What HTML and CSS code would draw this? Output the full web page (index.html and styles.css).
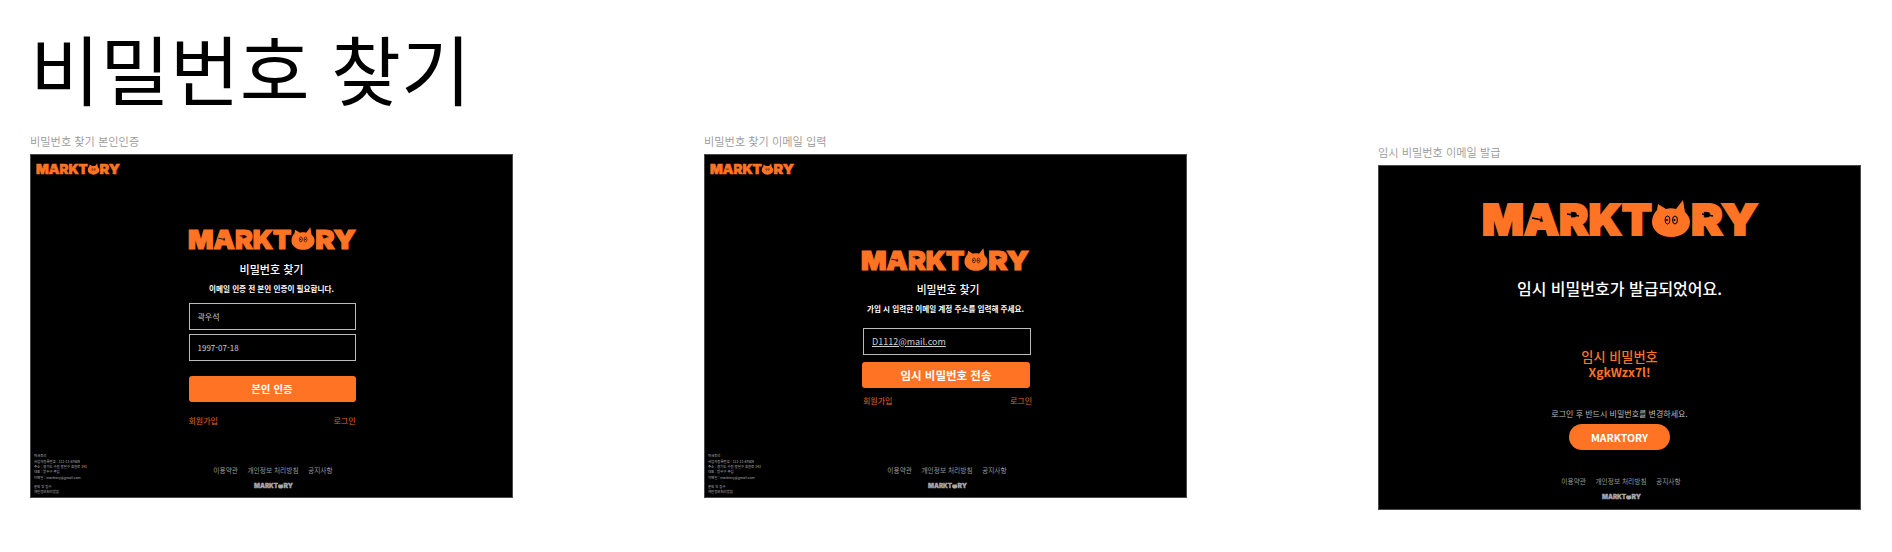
FILE: index.html
```html
<!DOCTYPE html>
<html lang="ko">
<head>
<meta charset="utf-8">
<title>비밀번호 찾기</title>
<link rel="stylesheet" href="styles.css">
</head>
<body>
<h1 class="page-title">비밀번호 찾기</h1>
<div class="boards">

  <section class="board">
    <p class="board-label">비밀번호 찾기 본인인증</p>
    <div class="screen">
      <div class="screen-head">
        <svg class="logo logo-sm" viewBox="0 0 276 37"><text class="logo-text" x="0" y="35" textLength="170" lengthAdjust="spacingAndGlyphs">MARKT</text><text class="logo-text" x="209" y="35" textLength="67" lengthAdjust="spacingAndGlyphs">RY</text><path class="logo-fill" d="M170 22C170 17 172 13 175 10L176 4L184 9C187 8 191 8 194 9L201 0L203 12C206 15 208 18 208 22C208 31 199 37 189 37C179 37 170 31 170 22Z"/><ellipse class="logo-eye" cx="185.5" cy="20" rx="2.4" ry="4"/><ellipse class="logo-eye" cx="193" cy="20" rx="2.4" ry="4"/><circle class="logo-pupil" cx="185" cy="20" r="1"/><circle class="logo-pupil" cx="192.5" cy="20" r="1"/><path class="logo-mark" d="M50 18L60 20M85 14L97 16M220 14L231 16"/></svg>
      </div>
      <div class="auth auth-verify">
        <svg class="logo logo-md" viewBox="0 0 276 37"><text class="logo-text" x="0" y="35" textLength="170" lengthAdjust="spacingAndGlyphs">MARKT</text><text class="logo-text" x="209" y="35" textLength="67" lengthAdjust="spacingAndGlyphs">RY</text><path class="logo-fill" d="M170 22C170 17 172 13 175 10L176 4L184 9C187 8 191 8 194 9L201 0L203 12C206 15 208 18 208 22C208 31 199 37 189 37C179 37 170 31 170 22Z"/><ellipse class="logo-eye" cx="185.5" cy="20" rx="2.4" ry="4"/><ellipse class="logo-eye" cx="193" cy="20" rx="2.4" ry="4"/><circle class="logo-pupil" cx="185" cy="20" r="1"/><circle class="logo-pupil" cx="192.5" cy="20" r="1"/><path class="logo-mark" d="M50 18L60 20M85 14L97 16M220 14L231 16"/></svg>
        <h2 class="auth-title">비밀번호 찾기</h2>
        <p class="auth-desc">이메일 인증 전 본인 인증이 필요합니다.</p>
        <div class="field field-plain">곽우석</div>
        <div class="field field-plain field-next">1997-07-18</div>
        <div class="btn btn-verify">본인 인증</div>
        <div class="auth-links"><span>회원가입</span><span>로그인</span></div>
      </div>
      <footer class="screen-foot">
        <div class="foot-info">
          <p>마크토리</p>
          <p>사업자등록번호 : 111-11-67609</p>
          <p>주소 : 경기도 수원 팔달구 효원로 143</p>
          <p>대표 : 방우구 주임</p>
          <p>이메일 : marktory@gmail.com</p>
          <p class="foot-gap">문의 및 접수</p>
          <p>개인정보처리방침</p>
        </div>
        <div class="foot-center">
          <nav class="foot-nav"><span>이용약관</span><span>개인정보 처리방침</span><span>공지사항</span></nav>
          <svg class="logo logo-xs" viewBox="0 0 276 37"><text class="logo-text" x="0" y="35" textLength="170" lengthAdjust="spacingAndGlyphs">MARKT</text><text class="logo-text" x="209" y="35" textLength="67" lengthAdjust="spacingAndGlyphs">RY</text><path class="logo-fill" d="M170 22C170 17 172 13 175 10L176 4L184 9C187 8 191 8 194 9L201 0L203 12C206 15 208 18 208 22C208 31 199 37 189 37C179 37 170 31 170 22Z"/></svg>
        </div>
      </footer>
    </div>
  </section>

  <section class="board">
    <p class="board-label">비밀번호 찾기 이메일 입력</p>
    <div class="screen">
      <div class="screen-head">
        <svg class="logo logo-sm" viewBox="0 0 276 37"><text class="logo-text" x="0" y="35" textLength="170" lengthAdjust="spacingAndGlyphs">MARKT</text><text class="logo-text" x="209" y="35" textLength="67" lengthAdjust="spacingAndGlyphs">RY</text><path class="logo-fill" d="M170 22C170 17 172 13 175 10L176 4L184 9C187 8 191 8 194 9L201 0L203 12C206 15 208 18 208 22C208 31 199 37 189 37C179 37 170 31 170 22Z"/><ellipse class="logo-eye" cx="185.5" cy="20" rx="2.4" ry="4"/><ellipse class="logo-eye" cx="193" cy="20" rx="2.4" ry="4"/><circle class="logo-pupil" cx="185" cy="20" r="1"/><circle class="logo-pupil" cx="192.5" cy="20" r="1"/><path class="logo-mark" d="M50 18L60 20M85 14L97 16M220 14L231 16"/></svg>
      </div>
      <div class="auth auth-email">
        <svg class="logo logo-md" viewBox="0 0 276 37"><text class="logo-text" x="0" y="35" textLength="170" lengthAdjust="spacingAndGlyphs">MARKT</text><text class="logo-text" x="209" y="35" textLength="67" lengthAdjust="spacingAndGlyphs">RY</text><path class="logo-fill" d="M170 22C170 17 172 13 175 10L176 4L184 9C187 8 191 8 194 9L201 0L203 12C206 15 208 18 208 22C208 31 199 37 189 37C179 37 170 31 170 22Z"/><ellipse class="logo-eye" cx="185.5" cy="20" rx="2.4" ry="4"/><ellipse class="logo-eye" cx="193" cy="20" rx="2.4" ry="4"/><circle class="logo-pupil" cx="185" cy="20" r="1"/><circle class="logo-pupil" cx="192.5" cy="20" r="1"/><path class="logo-mark" d="M50 18L60 20M85 14L97 16M220 14L231 16"/></svg>
        <h2 class="auth-title">비밀번호 찾기</h2>
        <p class="auth-desc">가입 시 입력한 이메일 계정 주소를 입력해 주세요.</p>
        <div class="field field-email"><span class="email-value">D1112@mail.com</span></div>
        <div class="btn btn-send">임시 비밀번호 전송</div>
        <div class="auth-links auth-links-tight"><span>회원가입</span><span>로그인</span></div>
      </div>
      <footer class="screen-foot">
        <div class="foot-info">
          <p>마크토리</p>
          <p>사업자등록번호 : 111-11-67609</p>
          <p>주소 : 경기도 수원 팔달구 효원로 143</p>
          <p>대표 : 방우구 주임</p>
          <p>이메일 : marktory@gmail.com</p>
          <p class="foot-gap">문의 및 접수</p>
          <p>개인정보처리방침</p>
        </div>
        <div class="foot-center">
          <nav class="foot-nav"><span>이용약관</span><span>개인정보 처리방침</span><span>공지사항</span></nav>
          <svg class="logo logo-xs" viewBox="0 0 276 37"><text class="logo-text" x="0" y="35" textLength="170" lengthAdjust="spacingAndGlyphs">MARKT</text><text class="logo-text" x="209" y="35" textLength="67" lengthAdjust="spacingAndGlyphs">RY</text><path class="logo-fill" d="M170 22C170 17 172 13 175 10L176 4L184 9C187 8 191 8 194 9L201 0L203 12C206 15 208 18 208 22C208 31 199 37 189 37C179 37 170 31 170 22Z"/></svg>
        </div>
      </footer>
    </div>
  </section>

  <section class="board board-mail">
    <p class="board-label">임시 비밀번호 이메일 발급</p>
    <div class="screen">
      <div class="mail">
        <svg class="logo logo-lg" viewBox="0 0 276 37"><text class="logo-text" x="0" y="35" textLength="170" lengthAdjust="spacingAndGlyphs">MARKT</text><text class="logo-text" x="209" y="35" textLength="67" lengthAdjust="spacingAndGlyphs">RY</text><path class="logo-fill" d="M170 22C170 17 172 13 175 10L176 4L184 9C187 8 191 8 194 9L201 0L203 12C206 15 208 18 208 22C208 31 199 37 189 37C179 37 170 31 170 22Z"/><ellipse class="logo-eye" cx="185.5" cy="20" rx="2.4" ry="4"/><ellipse class="logo-eye" cx="193" cy="20" rx="2.4" ry="4"/><circle class="logo-pupil" cx="185" cy="20" r="1"/><circle class="logo-pupil" cx="192.5" cy="20" r="1"/><path class="logo-mark" d="M50 18L60 20M85 14L97 16M220 14L231 16"/></svg>
        <h2 class="mail-title">임시 비밀번호가 발급되었어요.</h2>
        <p class="mail-temp">임시 비밀번호</p>
        <p class="mail-code">XgkWzx7l!</p>
        <p class="mail-note">로그인 후 반드시 비밀번호를 변경하세요.</p>
        <div class="btn btn-pill">MARKTORY</div>
      </div>
      <footer class="screen-foot">
        <div class="foot-info"></div>
        <div class="foot-center">
          <nav class="foot-nav"><span>이용약관</span><span>개인정보 처리방침</span><span>공지사항</span></nav>
          <svg class="logo logo-xs" viewBox="0 0 276 37"><text class="logo-text" x="0" y="35" textLength="170" lengthAdjust="spacingAndGlyphs">MARKT</text><text class="logo-text" x="209" y="35" textLength="67" lengthAdjust="spacingAndGlyphs">RY</text><path class="logo-fill" d="M170 22C170 17 172 13 175 10L176 4L184 9C187 8 191 8 194 9L201 0L203 12C206 15 208 18 208 22C208 31 199 37 189 37C179 37 170 31 170 22Z"/></svg>
        </div>
      </footer>
    </div>
  </section>

</div>
</body>
</html>
```

FILE: styles.css
```css
* { box-sizing: border-box; margin: 0; padding: 0; }

html, body { background: #fff; }

body {
  width: 1892px;
  height: 552px;
  overflow: hidden;
  padding: 0 31px 0 30px;
  font-family: "Noto Sans CJK KR", "Noto Sans", sans-serif;
}

.page-title {
  height: 131px;
  padding-top: 15px;
  font-size: 76px;
  line-height: 105px;
  font-weight: 400;
  color: #000;
}

.boards {
  display: flex;
  justify-content: space-between;
  align-items: flex-start;
}

.board { width: 483px; }
.board-mail { margin-top: 11px; }

.board-label {
  height: 23px;
  font-size: 11.2px;
  line-height: 20px;
  font-weight: 350;
  color: #999;
}

.screen {
  display: flex;
  flex-direction: column;
  height: 344px;
  background: #000;
  border: 1px solid #4a4a4a;
  color: #fff;
}
.board-mail .screen { height: 345px; }
.board-mail .screen-foot { padding-bottom: 3.5px; }

.screen-head { height: 72px; padding: 8px 0 0 5px; }

.logo { display: block; overflow: visible; color: #ff7324; }
.logo-text {
  font-family: Inter, "Liberation Sans", sans-serif;
  font-size: 43px;
  font-weight: 900;
  fill: currentColor;
  stroke: currentColor;
  stroke-width: 2px;
}
.logo-fill { fill: currentColor; }
.logo-eye { fill: currentColor; stroke: #000; stroke-width: 1px; }
.logo-pupil { fill: #000; }
.logo-mark { fill: none; stroke: #000; stroke-width: 1.4px; }
.logo-sm { width: 84px; height: 12px; }
.logo-md { width: 168px; height: 23px; }
.logo-lg { width: 276px; height: 37px; }
.logo-xs { width: 39px; height: 6px; color: #a8a8a8; }

.auth {
  display: flex;
  flex-direction: column;
  width: 168px;
  margin: 0 auto;
}
.auth-email { margin-top: 21px; width: 169px; }

.auth-title {
  margin-top: 11px;
  font-size: 11px;
  line-height: 16px;
  font-weight: 500;
  text-align: center;
}
.auth-email .auth-title { margin-top: 10px; padding-left: 5px; font-size: 10.8px; }

.auth-desc {
  margin-top: 6px;
  font-size: 7.6px;
  line-height: 12px;
  font-weight: 700;
  text-align: center;
  white-space: nowrap;
}

.field {
  display: flex;
  align-items: center;
  height: 27px;
  margin: 7.5px 0 0 1px;
  padding-left: 8px;
  border: 1px solid #bbb;
  font-size: 8px;
  color: #ccc;
}
.field-next { margin-top: 4px; }
.field-email { width: 168px; margin: 12.5px 0 0 2px; font-size: 9px; }
.email-value { text-decoration: underline; text-underline-offset: 1px; }

.btn {
  display: flex;
  align-items: center;
  justify-content: center;
  background: #ff7324;
  color: #fff;
  font-weight: 700;
}
.btn-verify, .btn-send { height: 26px; border-radius: 3px; }
.btn-verify { margin: 15px 0 0 1px; font-size: 10.5px; }
.btn-send { width: 168px; margin: 7px 0 0 1px; font-size: 11.5px; }
.btn-pill {
  width: 101px;
  height: 26px;
  margin-top: 3px;
  border-radius: 13px;
  font-size: 10.5px;
  font-weight: 700;
}

.auth-links {
  display: flex;
  justify-content: space-between;
  margin-top: 13px;
  margin-left: 1px;
  font-size: 8px;
  line-height: 12px;
  color: #e8641c;
}
.auth-links-tight { width: 169px; margin: 7px 0 0 2px; }

.mail {
  display: flex;
  flex-direction: column;
  align-items: center;
}
.mail .logo-lg { margin-top: 34px; }
.mail-title {
  margin-top: 31px;
  font-size: 16px;
  line-height: 40px;
  font-weight: 500;
}
.mail-temp {
  margin-top: 40px;
  font-size: 13.2px;
  line-height: 18px;
  font-weight: 500;
  color: #ff7324;
}
.mail-code {
  font-size: 12.2px;
  line-height: 12px;
  font-weight: 700;
  color: #ff7324;
}
.mail-note {
  margin-top: 29px;
  font-size: 8px;
  line-height: 14px;
  color: #bbb;
}

.screen-foot {
  display: grid;
  grid-template-columns: 1fr auto 1fr;
  align-items: end;
  margin-top: auto;
  padding: 0 0 2.5px 3px;
}

.foot-info {
  font-size: 3.4px;
  line-height: 5.3px;
  color: #b5b5b5;
  white-space: nowrap;
}
.foot-gap { margin-top: 4px; }

.foot-center {
  display: flex;
  flex-direction: column;
  align-items: center;
  gap: 8px;
  margin-bottom: 6px;
}
.foot-nav {
  display: flex;
  gap: 9.5px;
  font-size: 6.7px;
  line-height: 10px;
  color: #999;
}
```
